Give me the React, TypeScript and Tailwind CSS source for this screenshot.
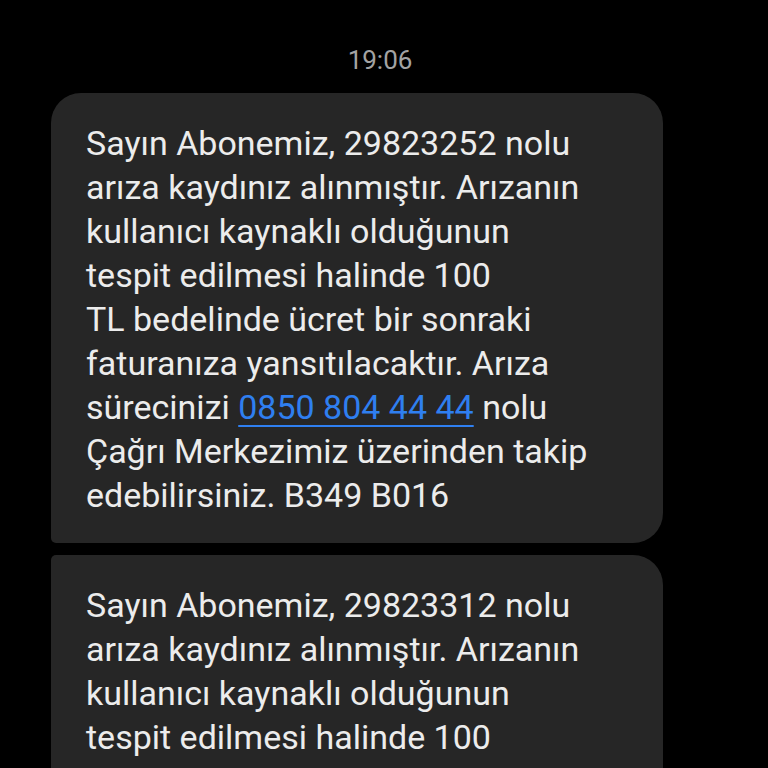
const lines1 = [
  'Sayın Abonemiz, 29823252 nolu',
  'arıza kaydınız alınmıştır. Arızanın',
  'kullanıcı kaynaklı olduğunun',
  'tespit edilmesi halinde 100',
  'TL bedelinde ücret bir sonraki',
  'faturanıza yansıtılacaktır. Arıza',
]

const lines2 = [
  'Sayın Abonemiz, 29823312 nolu',
  'arıza kaydınız alınmıştır. Arızanın',
  'kullanıcı kaynaklı olduğunun',
  'tespit edilmesi halinde 100',
  'TL bedelinde ücret bir sonraki',
  'faturanıza yansıtılacaktır. Arıza',
]

function Tail() {
  return (
    <>
      <div>
        sürecinizi{' '}
        <span className="text-[#2f7ff0] underline underline-offset-[6px] decoration-[2px]">
          0850 804 44 44
        </span>{' '}
        nolu
      </div>
      <div>Çağrı Merkezimiz üzerinden takip</div>
      <div>edebilirsiniz. B349 B016</div>
    </>
  )
}

function Bubble({ lines, className }: { lines: string[]; className: string }) {
  return (
    <div
      className={`w-[612px] bg-[#262626] pl-[35px] pr-4 pt-[28px] pb-[26px] text-[34px] leading-[44px] text-[#ececec] whitespace-nowrap ${className}`}
    >
      {lines.map((l) => (
        <div key={l}>{l}</div>
      ))}
      <Tail />
    </div>
  )
}

export default function App() {
  return (
    <div
      className="h-[768px] w-[768px] overflow-hidden bg-black"
      style={{ fontFamily: 'Roboto, "Noto Sans", sans-serif' }}
    >
      <div className="pt-[45px] pr-[8px] text-center text-[26px] leading-[30px] text-[#a3a3a3]">
        19:06
      </div>
      <div className="flex flex-col gap-[12px] pl-[51px] pt-[18px]">
        <Bubble lines={lines1} className="rounded-[30px] rounded-bl-[5px]" />
        <Bubble lines={lines2} className="rounded-[30px] rounded-tl-[5px]" />
      </div>
    </div>
  )
}
